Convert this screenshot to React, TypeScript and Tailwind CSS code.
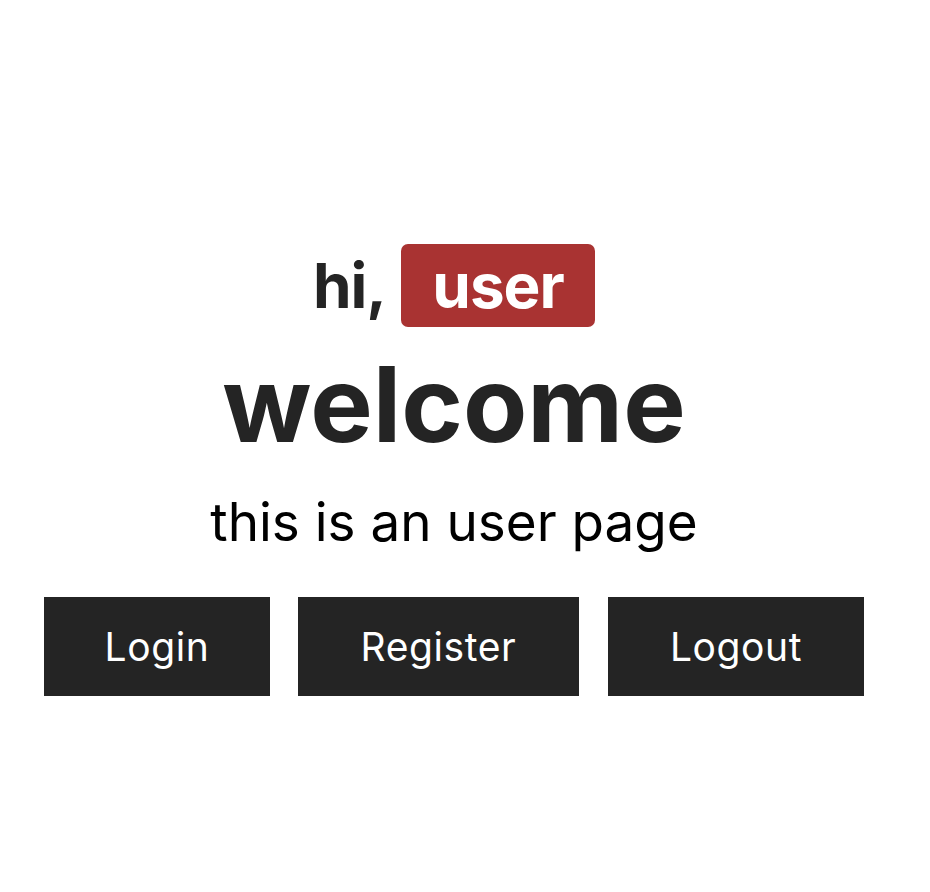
import React from "react";

export default function App() {
  const font = { fontFamily: "Inter, 'Noto Sans', sans-serif" };
  return (
    <div className="min-h-[892px] w-full bg-white" style={font}>
      <div className="flex w-[908px] flex-col items-center pt-[244px]">
        <div className="flex h-[83px] items-center text-[62px] font-bold leading-none text-[#242424]">
          <span className="tracking-[-1px]">hi,</span>
          <span className="ml-[15px] flex h-[83px] w-[194px] items-center justify-center rounded-[7px] bg-[#a93332] text-white tracking-[-1px]">
            user
          </span>
        </div>
        <h1 className="mt-[24px] text-[105px] font-bold leading-none text-[#242424]">
          welcome
        </h1>
        <p className="mt-[40px] text-[53px] leading-none text-black">
          this is an user page
        </p>
        <div className="mt-[48px] flex">
          <button className="flex h-[99px] w-[226px] items-center justify-center bg-[#242424] text-[39px] leading-none tracking-[0.6px] text-white">
            Login
          </button>
          <button className="ml-[28px] flex h-[99px] w-[281px] items-center justify-center bg-[#242424] text-[39px] leading-none tracking-[0.6px] text-white">
            Register
          </button>
          <button className="ml-[29px] flex h-[99px] w-[256px] items-center justify-center bg-[#242424] text-[39px] leading-none tracking-[0.6px] text-white">
            Logout
          </button>
        </div>
      </div>
    </div>
  );
}
